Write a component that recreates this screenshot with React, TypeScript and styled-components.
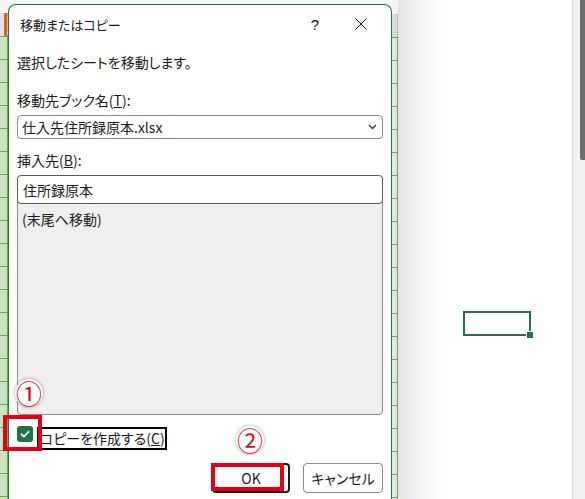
import React from "react";
import styled, { createGlobalStyle } from "styled-components";

const FONT = `"Noto Sans CJK JP", "Noto Sans", "Liberation Sans", sans-serif`;
const GRID = "#6aa84f";
const RED = "#e60016";
const EXCEL = "#217346";

const GlobalStyle = createGlobalStyle`
  html, body {
    margin: 0;
    padding: 0;
    background: #fff;
  }
  body {
    font-family: ${FONT};
  }
`;

const Screen = styled.div`
  position: relative;
  width: 585px;
  height: 499px;
  display: flex;
  overflow: hidden;
  background: #fff;
  font-family: ${FONT};
  font-feature-settings: "palt";
  color: #1b1b1b;
`;

// --- sheet behind the dialog ---

const Strip = styled.div<{ $w: number }>`
  width: ${(p) => p.$w}px;
  flex: none;
  display: flex;
  flex-direction: column;
`;

const StripTop = styled.div<{ $h: number }>`
  height: ${(p) => p.$h}px;
  flex: none;
  background: #f5f5f5;
`;

const RowHeader = styled.div<{ $selected?: boolean }>`
  height: 23px;
  flex: none;
  background: ${(p) =>
    p.$selected
      ? "linear-gradient(to right, #e2e2e2 0 4px, #d8661a 4px)"
      : "#dadada"};
  border-right: 1px dotted #9a9a9a;
`;

const Cells = styled.div<{ $fill: string; $lineLeft?: boolean }>`
  flex: 1;
  background:
    repeating-linear-gradient(
      to bottom,
      ${GRID} 0 1px,
      transparent 1px 23px
    ),
    ${(p) => p.$fill};
  border-right: 1px solid ${GRID};
  ${(p) => (p.$lineLeft ? `border-left: 1px solid ${GRID};` : "")}
`;

const Shade = styled.div`
  width: 47px;
  flex: none;
  background: linear-gradient(to right, #e4e4e4, #f4f4f4 45%, #fff);
`;

const Canvas = styled.div`
  position: relative;
  flex: 1;
`;

const ActiveCell = styled.div`
  position: absolute;
  left: 18px;
  top: 311px;
  width: 68px;
  height: 25px;
  box-sizing: border-box;
  border: 2px solid ${EXCEL};
`;

const FillHandle = styled.div`
  position: absolute;
  right: -5px;
  bottom: -5px;
  width: 6px;
  height: 6px;
  background: ${EXCEL};
  border: 1px solid #fff;
`;

const Scrollbar = styled.div`
  width: 13px;
  flex: none;
  box-sizing: border-box;
  border-left: 1px solid #dcdcdc;
  background: #f1f1f1;
  display: flex;
  justify-content: flex-end;
`;

const Thumb = styled.div`
  width: 5px;
  height: 160px;
  background: #6e6e6e;
  border-bottom-left-radius: 2px;
`;

// --- dialog ---

const DialogColumn = styled.div`
  width: 384px;
  flex: none;
  padding-top: 4px;
  display: flex;
  flex-direction: column;
  background: #f5f5f5;
`;

const Dialog = styled.div`
  flex: 1;
  display: flex;
  flex-direction: column;
  background: #fff;
  border: 1px solid #1f7a48;
  border-bottom: none;
  border-radius: 8px 8px 0 0;
`;

const TitleBar = styled.div`
  height: 38px;
  flex: none;
  display: flex;
  align-items: center;
  padding-left: 11px;
  padding-right: 7px;
`;

const Title = styled.div`
  flex: 1;
  font-size: 13px;
`;

const TitleButton = styled.div`
  width: 46px;
  height: 30px;
  display: flex;
  align-items: center;
  justify-content: center;
  font-family: "Liberation Sans", sans-serif;
  font-size: 15px;
  color: #111;
`;

const Body = styled.div`
  padding: 0 8px;
  display: flex;
  flex-direction: column;
  font-size: 14px;
`;

const TextRow = styled.div<{ $top: number }>`
  margin-top: ${(p) => p.$top}px;
  height: 24px;
  line-height: 24px;
  white-space: nowrap;
`;

const Select = styled.div`
  margin-top: 3px;
  height: 24px;
  box-sizing: border-box;
  border: 1px solid #8a8a8a;
  border-radius: 4px;
  display: flex;
  align-items: center;
  justify-content: space-between;
  padding: 0 5px 0 4px;
`;

const ListBox = styled.div`
  margin-top: 3px;
  height: 240px;
  box-sizing: border-box;
  border: 1px solid #8d8d8d;
  border-radius: 4px;
  background: #efefef;
  display: flex;
  flex-direction: column;
`;

const ListItem = styled.div<{ $active?: boolean }>`
  height: 29px;
  box-sizing: border-box;
  display: flex;
  align-items: center;
  padding-left: 4px;
  ${(p) =>
    p.$active
      ? `
    margin: -1px -1px 0;
    padding-left: 5px;
    background: #fff;
    border: 1.5px solid #5a5a5a;
    border-radius: 4px;
  `
      : ""}
`;

const CheckRow = styled.div`
  margin-top: 11px;
  height: 24px;
  display: flex;
  align-items: flex-start;
  gap: 4px;
`;

const CheckBox = styled.div`
  width: 16px;
  height: 16px;
  border-radius: 3px;
  background: ${EXCEL};
  display: flex;
  align-items: center;
  justify-content: center;
`;

const FocusLabel = styled.div`
  margin-top: 1px;
  height: 23px;
  box-sizing: border-box;
  border: 2px solid #000;
  padding: 0 0 0 1px;
  line-height: 19px;
  white-space: nowrap;
`;

const ButtonRow = styled.div`
  margin-top: 13px;
  display: flex;
  justify-content: flex-end;
  gap: 13px;
`;

const Button = styled.div<{ $default?: boolean; $w: number }>`
  width: ${(p) => p.$w}px;
  height: 30px;
  box-sizing: border-box;
  border-radius: 4px;
  display: flex;
  align-items: center;
  justify-content: center;
  background: #fdfdfd;
  border: ${(p) => (p.$default ? "2px solid #1a1a1a" : "1px solid #8a8a8a")};
`;

// --- annotations ---

const RedBox = styled.div<{ $x: number; $y: number; $w: number; $h: number }>`
  position: absolute;
  left: ${(p) => p.$x}px;
  top: ${(p) => p.$y}px;
  width: ${(p) => p.$w}px;
  height: ${(p) => p.$h}px;
  box-sizing: border-box;
  border: 4px solid ${RED};
`;

const Badge = styled.div<{ $cx: number; $cy: number }>`
  position: absolute;
  left: ${(p) => p.$cx - 14}px;
  top: ${(p) => p.$cy - 14}px;
  width: 28px;
  height: 28px;
  border-radius: 50%;
  background: #fff;
  box-shadow: 0 0 3px 1px rgba(0, 0, 0, 0.22);
  display: flex;
  align-items: center;
  justify-content: center;
  color: ${RED};
  font-size: 26px;
  line-height: 1;
`;

const CloseIcon = () => (
  <svg width="12" height="12" viewBox="0 0 12 12">
    <path d="M0.5 0.5 L11.5 11.5 M11.5 0.5 L0.5 11.5" stroke="#111" strokeWidth="1" fill="none" />
  </svg>
);

const Chevron = () => (
  <svg width="9" height="6" viewBox="0 0 9 6">
    <path d="M1 1 L4.5 4.5 L8 1" stroke="#333" strokeWidth="1.3" fill="none" />
  </svg>
);

const Check = () => (
  <svg width="16" height="16" viewBox="0 0 16 16">
    <path d="M4.3 8.2 L6.9 10.6 L11.7 5.6" stroke="#fff" strokeWidth="1.6" fill="none" strokeLinecap="round" strokeLinejoin="round" />
  </svg>
);

export default function App() {
  return (
    <Screen>
      <GlobalStyle />
      <Strip $w={8}>
        <StripTop $h={13} />
        <RowHeader $selected />
        <Cells $fill="#cde3c1" />
      </Strip>

      <DialogColumn>
        <Dialog>
          <TitleBar>
            <Title>移動またはコピー</Title>
            <TitleButton>?</TitleButton>
            <TitleButton>
              <CloseIcon />
            </TitleButton>
          </TitleBar>
          <Body>
            <TextRow $top={7}>選択したシートを移動します。</TextRow>
            <TextRow $top={14}>
              移動先ブック名(<u>T</u>):
            </TextRow>
            <Select>
              <span>仕入先住所録原本.xlsx</span>
              <Chevron />
            </Select>
            <TextRow $top={9}>
              挿入先(<u>B</u>):
            </TextRow>
            <ListBox>
              <ListItem $active>住所録原本</ListItem>
              <ListItem>(末尾へ移動)</ListItem>
            </ListBox>
            <CheckRow>
              <CheckBox>
                <Check />
              </CheckBox>
              <FocusLabel>
                コピーを作成する(<u>C</u>)
              </FocusLabel>
            </CheckRow>
            <ButtonRow>
              <Button $default $w={78}>OK</Button>
              <Button $w={80}>キャンセル</Button>
            </ButtonRow>
          </Body>
        </Dialog>
      </DialogColumn>

      <Strip $w={6}>
        <StripTop $h={14} />
        <RowHeader />
        <Cells $fill="#e4e4e4" />
      </Strip>

      <Shade />

      <Canvas>
        <ActiveCell>
          <FillHandle />
        </ActiveCell>
      </Canvas>

      <Scrollbar>
        <Thumb />
      </Scrollbar>

      <RedBox $x={3} $y={415} $w={39} $h={36} />
      <RedBox $x={211} $y={463} $w={73} $h={28} />
      <Badge $cx={29} $cy={393}>①</Badge>
      <Badge $cx={250} $cy={440}>②</Badge>
    </Screen>
  );
}
